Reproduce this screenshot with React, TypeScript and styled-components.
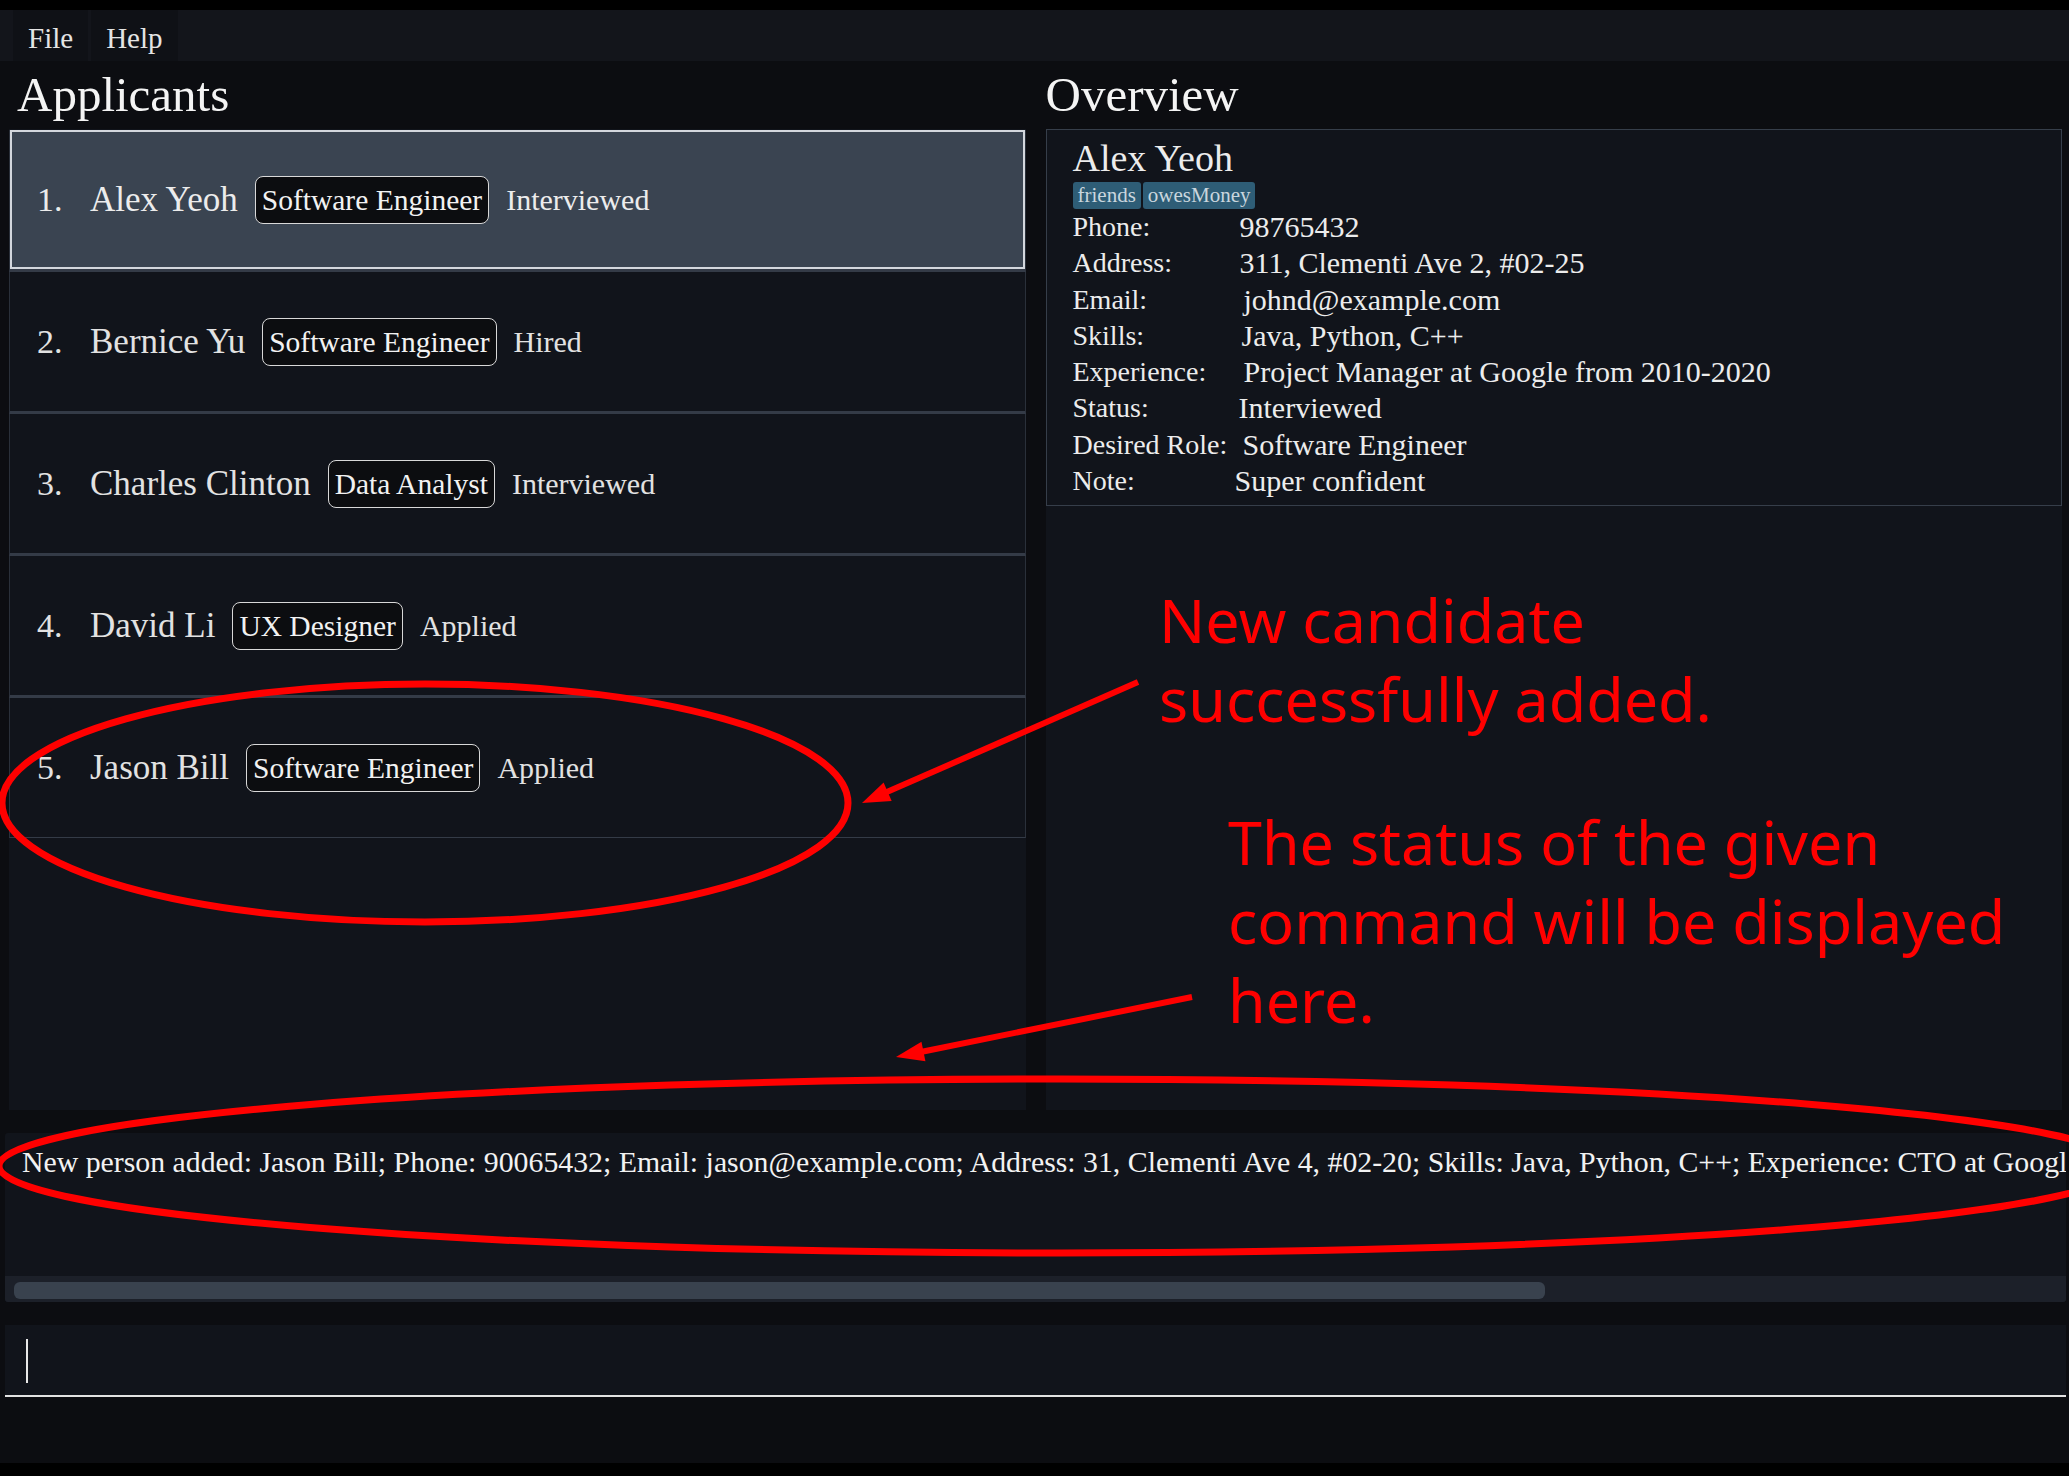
import React from "react";
import styled, { createGlobalStyle, css } from "styled-components";

const GlobalStyle = createGlobalStyle`
  html, body { margin: 0; padding: 0; background: #000; }
  body { font-family: "Liberation Serif", "Times New Roman", serif; }
  #root { width: 2069px; }
`;

const Screen = styled.div`
  position: relative;
  width: 2069px;
  height: 1476px;
  overflow: hidden;
  background: #000;
  padding: 10px 0 13px;
  box-sizing: border-box;
`;

const Window = styled.div`
  height: 100%;
  background: #0c0d11;
  display: flex;
  flex-direction: column;
`;

const MenuBar = styled.div`
  height: 51px;
  flex: none;
  background: #13151b;
  display: flex;
  gap: 3px;
  padding-left: 13px;
`;

const MenuItem = styled.div`
  display: flex;
  align-items: center;
  padding: 5px 15px 0;
  background: #0f1116;
  color: #e4e4e4;
  font-size: 29px;
`;

const Main = styled.div`
  flex: none;
  height: 1049px;
  display: grid;
  grid-template-columns: 1fr 1fr;
  column-gap: 20px;
  padding: 0 7px 0 9px;
`;

const Column = styled.section`
  display: flex;
  flex-direction: column;
  min-width: 0;
`;

const Title = styled.h1<{ $indent: number }>`
  margin: 0;
  height: 68px;
  flex: none;
  line-height: 68px;
  font-size: 49px;
  font-weight: normal;
  color: #f4f4f4;
  padding-left: ${(p) => p.$indent}px;
`;

const Panel = styled.div`
  flex: 1;
  background: #11141b;
  display: flex;
  flex-direction: column;
`;

const List = styled.div`
  padding-top: 1px;
  display: flex;
  flex-direction: column;
`;

const Cell = styled.div<{ $selected?: boolean }>`
  height: 142px;
  box-sizing: border-box;
  display: flex;
  align-items: center;
  padding-left: 27px;
  border-left: 1px solid #2a303a;
  border-right: 1px solid #2a303a;
  border-bottom: 3px solid #343b47;
  color: #e2e2e2;
  &:last-child {
    border-bottom-width: 1px;
    height: 140px;
  }
  ${(p) =>
    p.$selected &&
    css`
      background: #3a4451;
      box-shadow: inset 0 0 0 2px #d3d7dd;
      color: #ececec;
    `}
`;

const Index = styled.span`
  width: 53px;
  flex: none;
  font-size: 34px;
`;

const Name = styled.span`
  font-size: 35px;
  margin-right: 17px;
  white-space: nowrap;
`;

const RoleBadge = styled.span`
  font-size: 29.5px;
  line-height: 36px;
  padding: 5px 6px;
  border: 1.5px solid #d8d8d8;
  border-radius: 8px;
  background: #0c0d10;
  color: #f2f2f2;
  margin-right: 17px;
  white-space: nowrap;
`;

const Status = styled.span`
  font-size: 30px;
  white-space: nowrap;
`;

const OverviewCard = styled.div`
  border: 1.5px solid #363e4a;
  padding: 8px 24px 6px 26px;
  color: #ececec;
`;

const PersonName = styled.div`
  font-size: 38px;
  line-height: 40px;
`;

const Tags = styled.div`
  display: flex;
  gap: 2px;
  margin-top: 4px;
  height: 27px;
`;

const Tag = styled.span`
  background: #2e5d76;
  color: #c9d6de;
  font-size: 21px;
  line-height: 27px;
  padding: 0 5px;
  border-radius: 3px;
`;

const Details = styled.div`
  display: grid;
  grid-template-columns: 167px 1fr;
  line-height: 36.3px;
`;

const Label = styled.span`
  font-size: 28px;
  white-space: nowrap;
`;

const Value = styled.span<{ $shift: number }>`
  font-size: 30px;
  white-space: nowrap;
  margin-left: ${(p) => p.$shift}px;
`;

const Bottom = styled.div`
  flex: none;
  padding: 0 3px 0 5px;
  display: flex;
  flex-direction: column;
`;

const ResultPane = styled.div`
  margin-top: 23px;
  background: #11141b;
  border-radius: 3px;
  overflow: hidden;
`;

const ResultText = styled.div`
  height: 143px;
  box-sizing: border-box;
  padding: 12px 17px;
  font-size: 29.8px;
  line-height: 34px;
  color: #f2f2f2;
  white-space: nowrap;
  overflow: hidden;
`;

const ScrollTrack = styled.div`
  height: 26px;
  background: #1c2029;
  padding: 6px 0 0 9px;
  box-sizing: border-box;
`;

const ScrollThumb = styled.div<{ $width: number }>`
  width: ${(p) => p.$width}px;
  height: 17px;
  border-radius: 6px;
  background: #39424e;
`;

const CommandBox = styled.div`
  margin-top: 23px;
  height: 72px;
  box-sizing: border-box;
  background: #11141b;
  border-bottom: 2px solid #e2e2e2;
  padding: 14px 0 0 21px;
`;

const Caret = styled.span`
  display: block;
  width: 2px;
  height: 44px;
  background: #e8e8e8;
`;

const Overlay = styled.div`
  position: absolute;
  inset: 0;
  pointer-events: none;
`;

const Sketch = styled.svg`
  position: absolute;
  left: 0;
  top: 0;
`;

const Callout = styled.div<{ $left: number; $top: number }>`
  position: absolute;
  left: ${(p) => p.$left}px;
  top: ${(p) => p.$top}px;
  font-family: "Noto Sans", "Open Sans", sans-serif;
  font-size: 61px;
  line-height: 79px;
  color: #ff0000;
  white-space: nowrap;
`;

type Applicant = { name: string; role: string; status: string };

const applicants: Applicant[] = [
  { name: "Alex Yeoh", role: "Software Engineer", status: "Interviewed" },
  { name: "Bernice Yu", role: "Software Engineer", status: "Hired" },
  { name: "Charles Clinton", role: "Data Analyst", status: "Interviewed" },
  { name: "David Li", role: "UX Designer", status: "Applied" },
  { name: "Jason Bill", role: "Software Engineer", status: "Applied" },
];

const details: [string, string, number][] = [
  ["Phone:", "98765432", 0],
  ["Address:", "311, Clementi Ave 2, #02-25", 0],
  ["Email:", "johnd@example.com", 4],
  ["Skills:", "Java, Python, C++", 2],
  ["Experience:", "Project Manager at Google from 2010-2020", 4],
  ["Status:", "Interviewed", -1],
  ["Desired Role:", "Software Engineer", 3],
  ["Note:", "Super confident", -5],
];

function Arrow({ x1, y1, x2, y2 }: { x1: number; y1: number; x2: number; y2: number }) {
  const dx = x2 - x1;
  const dy = y2 - y1;
  const len = Math.hypot(dx, dy);
  const ux = dx / len;
  const uy = dy / len;
  const headLen = 28;
  const half = 10;
  const bx = x2 - ux * headLen;
  const by = y2 - uy * headLen;
  const px = -uy;
  const py = ux;
  const pts = `${x2},${y2} ${bx + px * half},${by + py * half} ${bx - px * half},${by - py * half}`;
  return (
    <g>
      <line x1={x1} y1={y1} x2={bx + ux * 4} y2={by + uy * 4} stroke="#ff0000" strokeWidth={6} />
      <polygon points={pts} fill="#ff0000" />
    </g>
  );
}

export default function App() {
  return (
    <>
      <GlobalStyle />
      <Screen>
        <Window>
          <MenuBar>
            <MenuItem>File</MenuItem>
            <MenuItem>Help</MenuItem>
          </MenuBar>
          <Main>
            <Column>
              <Title $indent={8}>Applicants</Title>
              <Panel>
                <List>
                  {applicants.map((a, i) => (
                    <Cell key={a.name} $selected={i === 0}>
                      <Index>{i + 1}.</Index>
                      <Name>{a.name}</Name>
                      <RoleBadge>{a.role}</RoleBadge>
                      <Status>{a.status}</Status>
                    </Cell>
                  ))}
                </List>
              </Panel>
            </Column>
            <Column>
              <Title $indent={0}>Overview</Title>
              <Panel>
                <OverviewCard>
                  <PersonName>Alex Yeoh</PersonName>
                  <Tags>
                    <Tag>friends</Tag>
                    <Tag>owesMoney</Tag>
                  </Tags>
                  <Details>
                    {details.map(([k, v, s]) => (
                      <React.Fragment key={k}>
                        <Label>{k}</Label>
                        <Value $shift={s}>{v}</Value>
                      </React.Fragment>
                    ))}
                  </Details>
                </OverviewCard>
              </Panel>
            </Column>
          </Main>
          <Bottom>
            <ResultPane>
              <ResultText>
                New person added: Jason Bill; Phone: 90065432; Email: jason@example.com; Address: 31, Clementi Ave 4, #02-20; Skills: Java, Python, C++; Experience: CTO at Google
              </ResultText>
              <ScrollTrack>
                <ScrollThumb $width={1531} />
              </ScrollTrack>
            </ResultPane>
            <CommandBox>
              <Caret />
            </CommandBox>
          </Bottom>
        </Window>
        <Overlay>
          <Sketch width={2069} height={1476} viewBox="0 0 2069 1476">
            <ellipse cx={425} cy={803} rx={423} ry={119} fill="none" stroke="#ff0000" strokeWidth={7} />
            <ellipse cx={1061} cy={1166} rx={1062} ry={87} fill="none" stroke="#ff0000" strokeWidth={7} />
            <Arrow x1={1138} y1={682} x2={862} y2={803} />
            <Arrow x1={1192} y1={997} x2={896} y2={1057} />
          </Sketch>
          <Callout $left={1159} $top={580}>
            New candidate
            <br />
            successfully added.
          </Callout>
          <Callout $left={1228} $top={802}>
            The status of the given
            <br />
            command will be displayed
            <br />
            here.
          </Callout>
        </Overlay>
      </Screen>
    </>
  );
}
